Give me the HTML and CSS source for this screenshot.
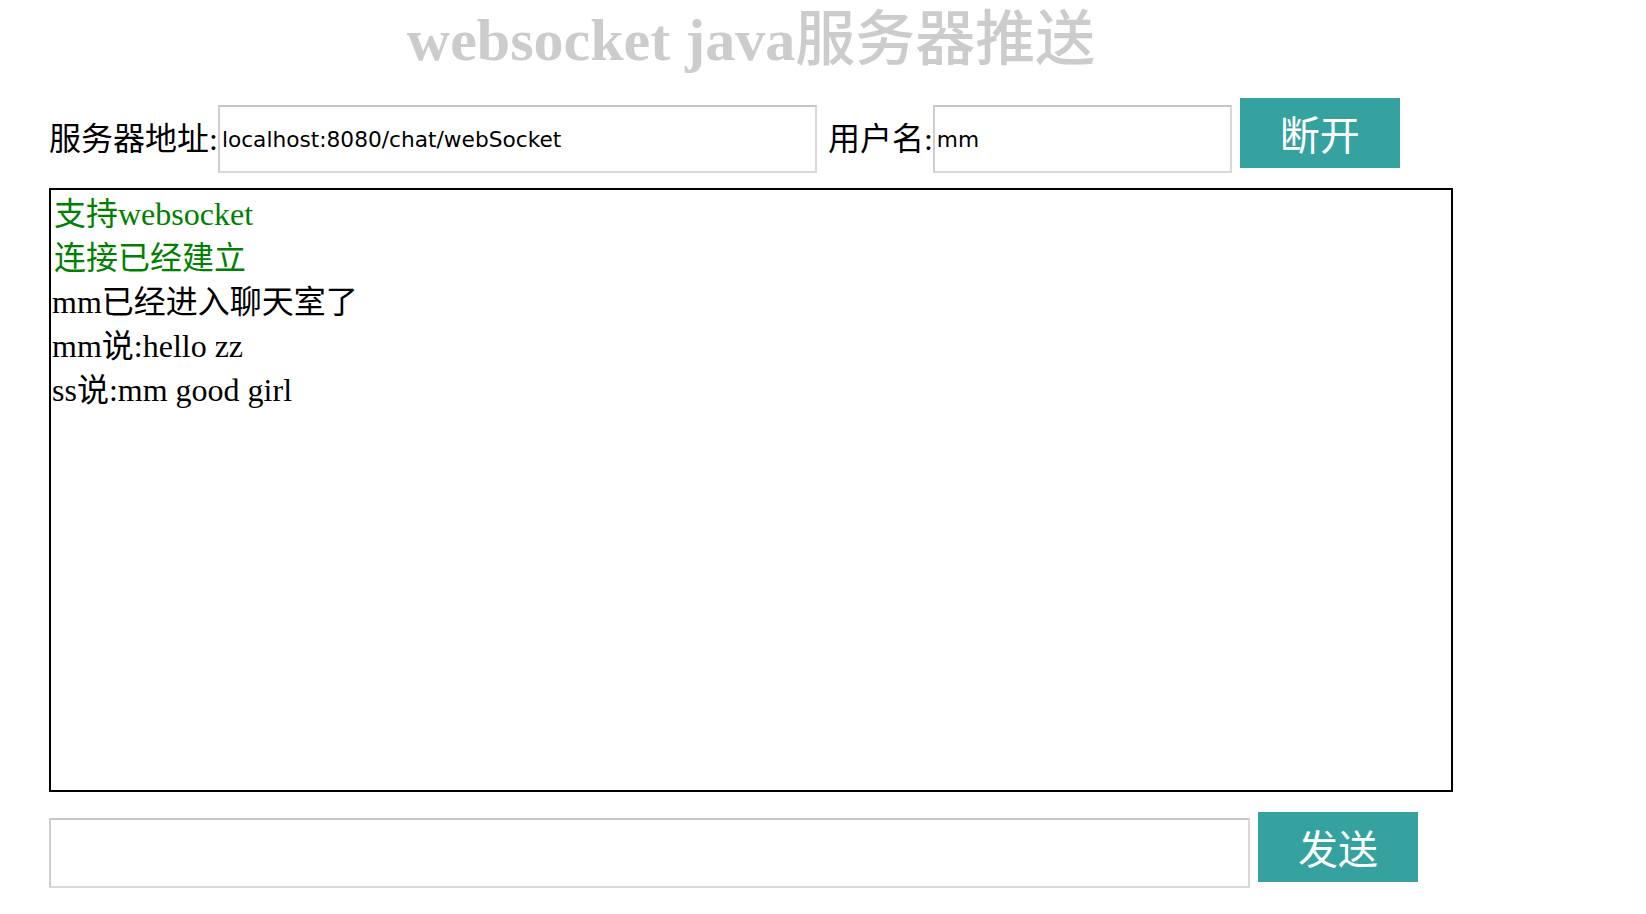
FILE: index.html
```html
<!DOCTYPE html>
<html lang="zh-CN">
<head>
<meta charset="utf-8">
<title>websocket java服务器推送</title>
<link rel="stylesheet" href="styles.css">
</head>
<body>
<div class="page">
  <h1 class="title">websocket java<span class="title-cn">服务器推送</span></h1>
  <div class="conn-row">
    <label class="field-label">服务器地址:</label><input class="text-input url-input" type="text" value="localhost:8080/chat/webSocket">
    <label class="field-label user-label">用户名:</label><input class="text-input user-input" type="text" value="mm">
    <button class="btn conn-btn">断开</button>
  </div>
  <div class="messages">
    <div class="msg sys">支持websocket</div>
    <div class="msg sys">连接已经建立</div>
    <div class="msg">mm已经进入聊天室了</div>
    <div class="msg">mm说:hello zz</div>
    <div class="msg">ss说:mm good girl</div>
  </div>
  <div class="send-row">
    <input class="text-input msg-input" type="text">
    <button class="btn send-btn">发送</button>
  </div>
</div>
</body>
</html>
```

FILE: styles.css
```css
html, body {
  margin: 0;
  padding: 0;
  background: #ffffff;
}

.page {
  width: 1404px;
  padding-left: 49px;
  font-family: "Liberation Serif", "Noto Sans CJK SC", serif;
  color: #000;
}

.title {
  margin: 7px 0 0 0;
  height: 66px;
  line-height: 66px;
  font-size: 60px;
  font-weight: bold;
  color: #cccccc;
  text-align: center;
}

.title-cn {
  font-weight: 500;
  line-height: 40px;
}

.conn-row {
  display: flex;
  align-items: flex-start;
  margin-top: 25px;
}

.field-label {
  margin-top: 7px;
  font-size: 32px;
  line-height: 68px;
  white-space: nowrap;
}

.user-label {
  margin-left: 11px;
}

.text-input {
  box-sizing: border-box;
  margin: 7px 0 0 0;
  height: 68px;
  padding: 0 2px;
  border: 2px solid #d9d9d9;
  border-top-color: #c6c6c6;
  border-left-color: #cfcfcf;
  background: #fff;
  font-family: "DejaVu Sans", sans-serif;
  font-size: 21.7px;
  color: #000;
  outline: none;
}

.url-input {
  width: 599px;
}

.user-input {
  width: 299px;
}

.btn {
  box-sizing: border-box;
  width: 160px;
  height: 70px;
  padding: 0;
  border: none;
  background: #35a29f;
  color: #ffffff;
  font-family: "Noto Sans CJK SC", sans-serif;
  font-size: 40px;
  line-height: 70px;
  text-align: center;
}

.conn-btn {
  margin-left: 8px;
}

.messages {
  box-sizing: border-box;
  margin-top: 15px;
  width: 1404px;
  height: 604px;
  border: 2px solid #000;
  padding: 2px 1px 1px 1px;
  font-size: 32px;
  line-height: 44px;
}

.msg.sys {
  color: #008000;
  padding-left: 2px;
}

.send-row {
  display: flex;
  align-items: flex-start;
  margin-top: 20px;
}

.msg-input {
  margin-top: 6px;
  width: 1201px;
  height: 70px;
}

.send-btn {
  margin-left: 8px;
}
```
